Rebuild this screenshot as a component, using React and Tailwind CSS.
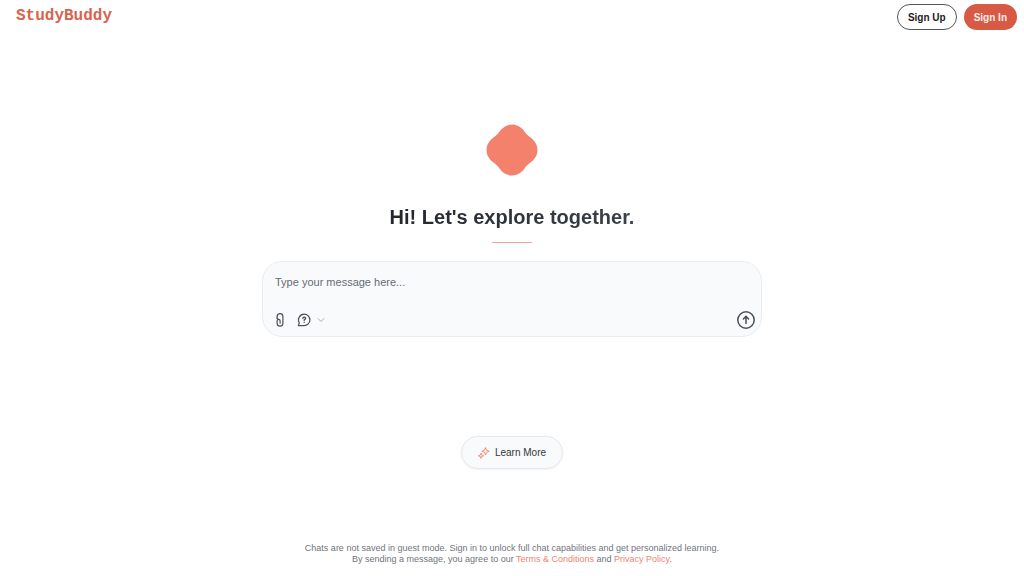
import { useState } from 'react'

function Blob() {
  return (
    <svg viewBox="0 0 52 52" className="size-[52px]" fill="#f4816c" aria-hidden="true">
      <path d="M13.5 7.5C20 -1.8 32 -1.8 38.5 7.5C40 9.7 42.3 12 44.5 13.5C53.8 20 53.8 32 44.5 38.5C42.3 40 40 42.3 38.5 44.5C32 53.8 20 53.8 13.5 44.5C12 42.3 9.7 40 7.5 38.5C-1.8 32 -1.8 20 7.5 13.5C9.7 12 12 9.7 13.5 7.5Z" />
    </svg>
  )
}

function ClipIcon() {
  return (
    <svg viewBox="0 0 8 14" className="h-[14px] w-2" fill="none" stroke="currentColor" strokeWidth="1.2" strokeLinecap="round" strokeLinejoin="round">
      <path d="M1.1 5.2V3.5a2.9 2.9 0 0 1 5.8 0v6.8a2.9 2.9 0 0 1-5.8 0V7.9a1.5 1.5 0 0 1 3 0v2.2" />
      <path d="M1.1 5.2a1.4 1.4 0 0 0 1.4 1.1" />
    </svg>
  )
}

function QuestionIcon() {
  return (
    <svg viewBox="0 0 14 14" className="size-[14px]" fill="none" stroke="currentColor" strokeWidth="1.2" strokeLinecap="round" strokeLinejoin="round">
      <path d="M7.2 1.2a5.7 5.7 0 1 1 0 11.4H1.4l.9-2.8A5.7 5.7 0 0 1 7.2 1.2Z" />
      <path d="M5.9 5.3c.1-1.6 2.7-1.5 2.6.1 0 1-1.3 1-1.3 1.9" strokeWidth="1.4" />
      <path d="M7.2 9.2v.1" strokeWidth="1.4" />
    </svg>
  )
}

function SendIcon() {
  return (
    <svg viewBox="0 0 18 18" className="size-[18px]" fill="none" stroke="currentColor" strokeWidth="1.5" strokeLinecap="round" strokeLinejoin="round">
      <circle cx="9" cy="9" r="8.2" />
      <path d="M9 12.6V5.8M6.4 8 9 5.4 11.6 8" />
    </svg>
  )
}

function SparkleIcon() {
  return (
    <svg viewBox="0 0 12 12" className="size-3" fill="none" stroke="currentColor" strokeWidth="0.9" strokeLinejoin="round">
      <path d="M7.5.6 8.5 3.3 11.2 4.3 8.5 5.3 7.5 8 6.5 5.3 3.8 4.3 6.5 3.3Z" />
      <path d="M3 6.2 3.7 8.1 5.6 8.8 3.7 9.5 3 11.4 2.3 9.5.4 8.8 2.3 8.1Z" />
    </svg>
  )
}

function Header() {
  return (
    <header className="flex items-start justify-between pt-1 pr-[7px] pl-4">
      <a href="#" className="font-['Liberation_Mono',monospace] text-base font-bold text-[#d9634f]">StudyBuddy</a>
      <div className="flex gap-[7px] text-[10px] font-bold">
        <button type="button" className="h-[26px] rounded-full border border-[#555] px-[10px] text-[#1c1c1c]">Sign Up</button>
        <button type="button" className="h-[26px] rounded-full bg-[#d75a45] px-[10px] text-[#fdeeea]">Sign In</button>
      </div>
    </header>
  )
}

function MessageBox() {
  const [message, setMessage] = useState('')

  return (
    <form
      onSubmit={e => e.preventDefault()}
      className="mt-[18px] flex w-full max-w-[500px] flex-col justify-between rounded-[20px] border border-[#e9edf0] bg-[#f8fafb] pt-3 pr-[6px] pb-[7px] pl-3"
    >
      <textarea
        value={message}
        onChange={e => setMessage(e.target.value)}
        aria-label="Message"
        placeholder="Type your message here..."
        rows={2}
        className="w-full resize-none text-[11px] leading-4 text-gray-800 outline-none placeholder:text-[#666c75]"
      />
      <div className="mt-[5px] flex items-center justify-between text-[#4b5157]">
        <div className="flex items-center gap-[13px] pl-px">
          <button type="button" aria-label="Attach a file"><ClipIcon /></button>
          <button type="button" aria-label="Question mode" className="flex items-center gap-[6px]">
            <QuestionIcon />
            <svg viewBox="0 0 8 8" className="size-2" fill="none" stroke="#a3a8ad" strokeWidth="0.9" strokeLinecap="round" strokeLinejoin="round">
              <path d="M1 2.5 4 5.5 7 2.5" />
            </svg>
          </button>
        </div>
        <button type="submit" aria-label="Send"><SendIcon /></button>
      </div>
    </form>
  )
}

export default function App() {
  return (
    <div className="flex min-h-screen flex-col bg-white font-['Liberation_Sans',Arial,sans-serif]">
      <Header />
      <main className="flex flex-1 flex-col items-center px-4 pt-[94px]">
        <Blob />
        <h1 className="mt-[27px] bg-linear-to-r from-[#23272d] to-[#3b414b] bg-clip-text text-xl leading-7 font-bold text-transparent">
          Hi! Let's explore together.
        </h1>
        <div className="mt-[11px] h-px w-10 bg-[#f2a596]" />
        <MessageBox />
        <button type="button" className="mt-[99px] flex h-[33px] items-center gap-[5px] rounded-full border border-[#e5e8eb] bg-[#f8fafb] px-4 text-[10px] text-[#33373d] shadow-xs">
          <span className="text-[#f0836f]"><SparkleIcon /></span>
          Learn More
        </button>
      </main>
      <footer className="pb-[11px] text-center text-[9px] leading-[11px] text-[#6f757e]">
        <p>Chats are not saved in guest mode. Sign in to unlock full chat capabilities and get personalized learning.</p>
        <p>
          By sending a message, you agree to our <a href="#" className="text-[#ee8571]">Terms &amp; Conditions</a> and <a href="#" className="text-[#ee8571]">Privacy Policy</a>.
        </p>
      </footer>
    </div>
  )
}
